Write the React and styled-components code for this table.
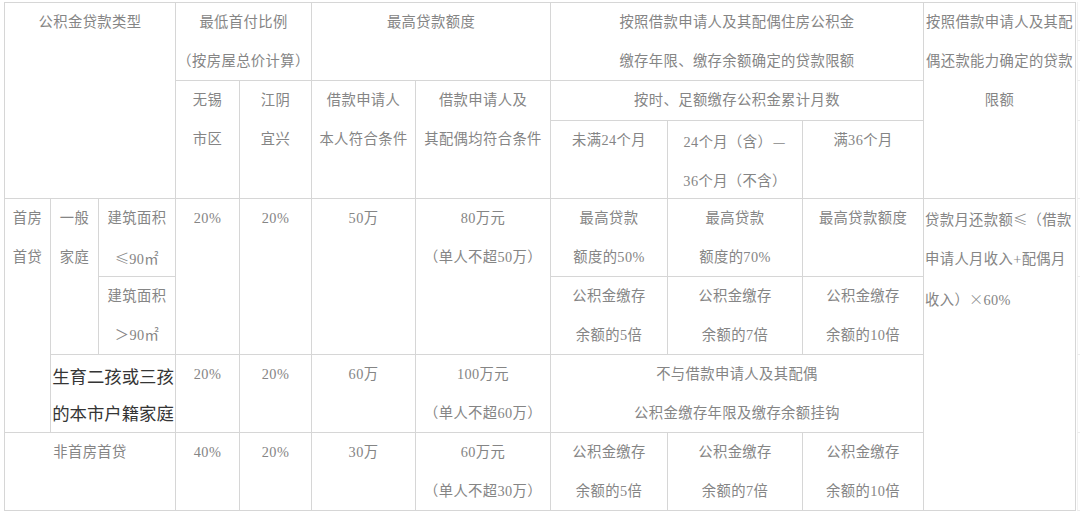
import React from "react";
import styled, { createGlobalStyle, css } from "styled-components";

const Global = createGlobalStyle`
  html, body {
    margin: 0;
    background: #ffffff;
    overflow: hidden;
  }
  body {
    padding: 2px 0 0 4px;
  }
`;

const LINE = "#d6d6d6";

const Sheet = styled.div`
  display: flex;
  align-items: flex-start;
  width: 1100px;
`;

const Grid = styled.div`
  display: grid;
  grid-template-columns: 46px 48px 77px 64px 72px 104px 135px 117px 135px 121px 152px;
  grid-template-rows: 78px 40px 78px 78px 78px 78px 78px;
  border-top: 1px solid ${LINE};
  border-left: 1px solid ${LINE};
  flex: none;
`;

const Cell = styled.div`
  box-sizing: border-box;
  grid-column: ${(p) => p.$c} / span ${(p) => p.$cs || 1};
  grid-row: ${(p) => p.$r} / span ${(p) => p.$rs || 1};
  border-right: 1px solid ${LINE};
  border-bottom: 1px solid ${LINE};
  font-family: "Liberation Serif", "Noto Sans CJK SC", serif;
  font-size: 14.3px;
  letter-spacing: 0.4px;
  line-height: 39px;
  color: #858585;
  text-align: center;
  white-space: nowrap;
  overflow: hidden;
  ${(p) =>
    p.$kind === "note" &&
    css`
      text-align: left;
      padding-left: 1px;
    `}
  ${(p) =>
    p.$kind === "family" &&
    css`
      font-family: "Noto Sans CJK SC", sans-serif;
      font-size: 17.4px;
      letter-spacing: 0;
      line-height: 37px;
      padding-top: 2px;
      color: #353535;
    `}
`;

const Wide = styled.span`
  display: inline-block;
  width: 1em;
  text-align: center;
  font-family: "Noto Sans CJK SC", sans-serif;
  font-weight: 300;
`;

const Stub = styled.div`
  display: flex;
  flex-direction: column;
  margin-left: 1px;
  width: 20px;
  flex: none;
`;

const StubRow = styled.div`
  box-sizing: border-box;
  height: ${(p) => p.$h}px;
  border-bottom: 1px solid #ececec;
  border-left: 1px solid #f2f2f2;
`;

const cells = [
  { c: 1, cs: 3, r: 1, rs: 3, t: ["公积金贷款类型"] },
  { c: 4, cs: 2, r: 1, t: ["最低首付比例", "（按房屋总价计算）"] },
  { c: 6, cs: 2, r: 1, t: ["最高贷款额度"] },
  { c: 8, cs: 3, r: 1, t: ["按照借款申请人及其配偶住房公积金", "缴存年限、缴存余额确定的贷款限额"] },
  { c: 11, r: 1, rs: 3, t: ["按照借款申请人及其配", "偶还款能力确定的贷款", "限额"] },
  { c: 4, r: 2, rs: 2, t: ["无锡", "市区"] },
  { c: 5, r: 2, rs: 2, t: ["江阴", "宜兴"] },
  { c: 6, r: 2, rs: 2, t: ["借款申请人", "本人符合条件"] },
  { c: 7, r: 2, rs: 2, t: ["借款申请人及", "其配偶均符合条件"] },
  { c: 8, cs: 3, r: 2, t: ["按时、足额缴存公积金累计月数"] },
  { c: 8, r: 3, t: ["未满24个月"] },
  { c: 9, r: 3, t: ["24个月（含）—", "36个月（不含）"] },
  { c: 10, r: 3, t: ["满36个月"] },

  { c: 1, r: 4, rs: 3, t: ["首房", "首贷"] },
  { c: 2, r: 4, rs: 2, t: ["一般", "家庭"] },
  { c: 3, r: 4, t: ["建筑面积", "≤90㎡"] },
  { c: 4, r: 4, rs: 2, t: ["20%"] },
  { c: 5, r: 4, rs: 2, t: ["20%"] },
  { c: 6, r: 4, rs: 2, t: ["50万"] },
  { c: 7, r: 4, rs: 2, t: ["80万元", "（单人不超50万）"] },
  { c: 8, r: 4, t: ["最高贷款", "额度的50%"] },
  { c: 9, r: 4, t: ["最高贷款", "额度的70%"] },
  { c: 10, r: 4, t: ["最高贷款额度"] },
  { c: 11, r: 4, rs: 4, kind: "note", t: ["贷款月还款额≤（借款", "申请人月收入+配偶月", "收入）×60%"] },
  { c: 3, r: 5, t: ["建筑面积", "＞90㎡"] },
  { c: 8, r: 5, t: ["公积金缴存", "余额的5倍"] },
  { c: 9, r: 5, t: ["公积金缴存", "余额的7倍"] },
  { c: 10, r: 5, t: ["公积金缴存", "余额的10倍"] },

  { c: 2, cs: 2, r: 6, kind: "family", t: ["生育二孩或三孩", "的本市户籍家庭"] },
  { c: 4, r: 6, t: ["20%"] },
  { c: 5, r: 6, t: ["20%"] },
  { c: 6, r: 6, t: ["60万"] },
  { c: 7, r: 6, t: ["100万元", "（单人不超60万）"] },
  { c: 8, cs: 3, r: 6, t: ["不与借款申请人及其配偶", "公积金缴存年限及缴存余额挂钩"] },

  { c: 1, cs: 3, r: 7, t: ["非首房首贷"] },
  { c: 4, r: 7, t: ["40%"] },
  { c: 5, r: 7, t: ["20%"] },
  { c: 6, r: 7, t: ["30万"] },
  { c: 7, r: 7, t: ["60万元", "（单人不超30万）"] },
  { c: 8, r: 7, t: ["公积金缴存", "余额的5倍"] },
  { c: 9, r: 7, t: ["公积金缴存", "余额的7倍"] },
  { c: 10, r: 7, t: ["公积金缴存", "余额的10倍"] },
];

const stubRows = [39, 40, 40, 78, 78, 78, 78, 78];

const WIDE = /([≤×—])/;

function renderLine(line) {
  return line.split(WIDE).map((part, k) =>
    WIDE.test(part) ? <Wide key={k}>{part}</Wide> : <React.Fragment key={k}>{part}</React.Fragment>
  );
}

export default function App() {
  return (
    <>
      <Global />
      <Sheet>
        <Grid>
          {cells.map((cell, i) => (
            <Cell key={i} $c={cell.c} $cs={cell.cs} $r={cell.r} $rs={cell.rs} $kind={cell.kind}>
              {cell.t.map((line, j) => (
                <React.Fragment key={j}>
                  {j > 0 && <br />}
                  {renderLine(line)}
                </React.Fragment>
              ))}
            </Cell>
          ))}
        </Grid>
        <Stub>
          {stubRows.map((h, i) => (
            <StubRow key={i} $h={h} />
          ))}
        </Stub>
      </Sheet>
    </>
  );
}
